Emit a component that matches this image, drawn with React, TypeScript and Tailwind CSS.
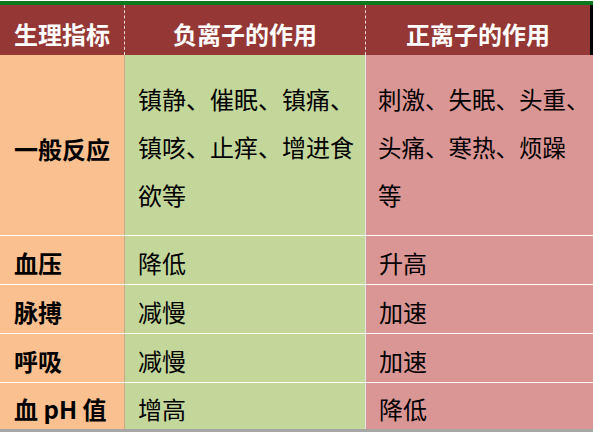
const rows = [
  { label: "血压", neg: "降低", pos: "升高" },
  { label: "脉搏", neg: "减慢", pos: "加速" },
  { label: "呼吸", neg: "减慢", pos: "加速" },
  { label: "血 pH 值", neg: "增高", pos: "降低" },
];

const font = { fontFamily: '"Microsoft YaHei", "Noto Sans CJK SC", sans-serif' };

export default function App() {
  return (
    <div className="w-[593px] h-[435px] overflow-hidden bg-white text-[24px] text-black" style={font}>
      <div className="h-[5px] border-t border-white bg-[#0b7a1e]" />

      {/* header */}
      <div className="grid h-[50px] grid-cols-[125px_241px_227px] bg-[#953735] font-bold text-white">
        <div className="flex items-center border-r border-dashed border-white/80 pl-[14px] pt-[8px]">生理指标</div>
        <div className="flex items-center justify-center border-r border-dashed border-white/80 pt-[8px]">负离子的作用</div>
        <div className="flex items-center justify-center border-r-[3px] border-black pt-[8px]">正离子的作用</div>
      </div>

      {/* general reaction */}
      <div className="grid h-[181px] grid-cols-[125px_241px_227px] grid-rows-[180px] border-b border-white whitespace-nowrap">
        <div className="flex items-center border-r border-[#c9a888] bg-[#fac090] pl-[14px] pt-[8px] font-bold">一般反应</div>
        <div className="flex flex-col justify-center border-r border-[#e6e6e6] bg-[#c4d79b] pl-[13px] pt-[4px] leading-[48px]">
          <span>镇静、催眠、镇痛、</span>
          <span>镇咳、止痒、增进食</span>
          <span>欲等</span>
        </div>
        <div className="flex flex-col justify-center bg-[#da9694] pl-[12px] pt-[4px] text-[23.5px] leading-[48px]">
          <span>刺激、失眠、头重、</span>
          <span>头痛、寒热、烦躁</span>
          <span>等</span>
        </div>
      </div>

      {rows.map((r, i) => (
        <div
          key={i}
          className={
            "grid grid-cols-[125px_241px_227px] whitespace-nowrap " +
            (i === rows.length - 1 ? "h-[49px] border-b-[3px] border-[#a6a6a6]" : "h-[49px] border-b border-white")
          }
        >
          <div className="flex items-center border-r border-[#c9a888] bg-[#fac090] pl-[14px] pt-[6px] font-bold">{r.label}</div>
          <div className="flex items-center border-r border-[#e6e6e6] bg-[#c4d79b] pl-[13px] pt-[6px]">{r.neg}</div>
          <div className="flex items-center bg-[#da9694] pl-[13px] pt-[6px]">{r.pos}</div>
        </div>
      ))}
    </div>
  );
}
